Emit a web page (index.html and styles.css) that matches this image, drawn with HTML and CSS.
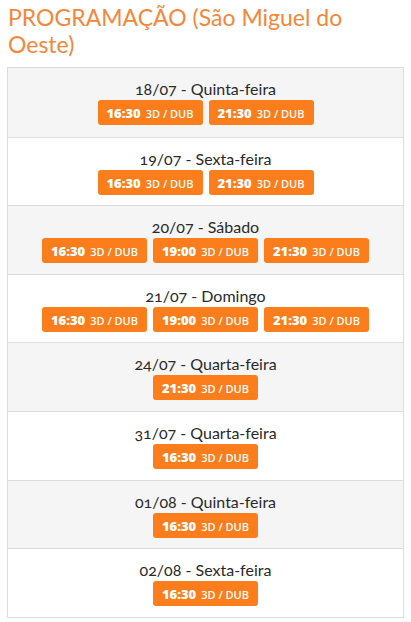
FILE: index.html
```html
<!DOCTYPE html>
<html lang="pt-BR">
<head>
<meta charset="utf-8">
<link rel="stylesheet" href="styles.css">
</head>
<body>
<h2 class="title">PROGRAMAÇÃO (São Miguel do Oeste)</h2>
<div class="schedule">
  <div class="day odd">
    <div class="date">18/07 - Quinta-feira</div>
    <div class="times">
      <span class="badge"><b>16:30</b> 3D / DUB</span>
      <span class="badge"><b>21:30</b> 3D / DUB</span>
    </div>
  </div>
  <div class="day">
    <div class="date">19/07 - Sexta-feira</div>
    <div class="times">
      <span class="badge"><b>16:30</b> 3D / DUB</span>
      <span class="badge"><b>21:30</b> 3D / DUB</span>
    </div>
  </div>
  <div class="day odd">
    <div class="date">20/07 - Sábado</div>
    <div class="times">
      <span class="badge"><b>16:30</b> 3D / DUB</span>
      <span class="badge"><b>19:00</b> 3D / DUB</span>
      <span class="badge"><b>21:30</b> 3D / DUB</span>
    </div>
  </div>
  <div class="day">
    <div class="date">21/07 - Domingo</div>
    <div class="times">
      <span class="badge"><b>16:30</b> 3D / DUB</span>
      <span class="badge"><b>19:00</b> 3D / DUB</span>
      <span class="badge"><b>21:30</b> 3D / DUB</span>
    </div>
  </div>
  <div class="day odd">
    <div class="date">24/07 - Quarta-feira</div>
    <div class="times">
      <span class="badge"><b>21:30</b> 3D / DUB</span>
    </div>
  </div>
  <div class="day">
    <div class="date">31/07 - Quarta-feira</div>
    <div class="times">
      <span class="badge"><b>16:30</b> 3D / DUB</span>
    </div>
  </div>
  <div class="day odd">
    <div class="date">01/08 - Quinta-feira</div>
    <div class="times">
      <span class="badge"><b>16:30</b> 3D / DUB</span>
    </div>
  </div>
  <div class="day">
    <div class="date">02/08 - Sexta-feira</div>
    <div class="times">
      <span class="badge"><b>16:30</b> 3D / DUB</span>
    </div>
  </div>
</div>
</body>
</html>
```
FILE: styles.css
```css
html, body {
  margin: 0;
  padding: 0;
  background: #fff;
}
body {
  padding: 4px 7px 0 7px;
  font-family: Lato, "Open Sans", sans-serif;
  color: #333;
}
.title {
  margin: 0 0 9px 1px;
  font-family: Lato, sans-serif;
  font-weight: 400;
  font-size: 23px;
  line-height: 27px;
  color: #f5873a;
}
.schedule {
  border: 1px solid #ddd;
  width: 395px;
}
.day {
  height: 68.6px;
  box-sizing: border-box;
  border-top: 1px solid #ddd;
  padding-top: 9px;
  display: flex;
  flex-direction: column;
  align-items: center;
  background: #fff;
}
.day:first-child {
  border-top: none;
}
.day.odd {
  background: #f5f5f5;
}
.date {
  font-family: Lato, sans-serif;
  font-size: 16px;
  line-height: 23px;
  color: #2a2a2a;
  font-variant-numeric: oldstyle-nums;
}
.times {
  display: flex;
  gap: 6px;
  justify-content: center;
}
.badge {
  display: inline-flex;
  align-items: baseline;
  justify-content: center;
  gap: 5px;
  width: 105px;
  height: 25px;
  box-sizing: border-box;
  padding-top: 4px;
  border-radius: 3px;
  background: #fb7d1b;
  color: #fff;
  font-family: "Open Sans", sans-serif;
  font-size: 11px;
  font-weight: 600;
}
.badge b {
  font-size: 13px;
  font-weight: 800;
}
```
